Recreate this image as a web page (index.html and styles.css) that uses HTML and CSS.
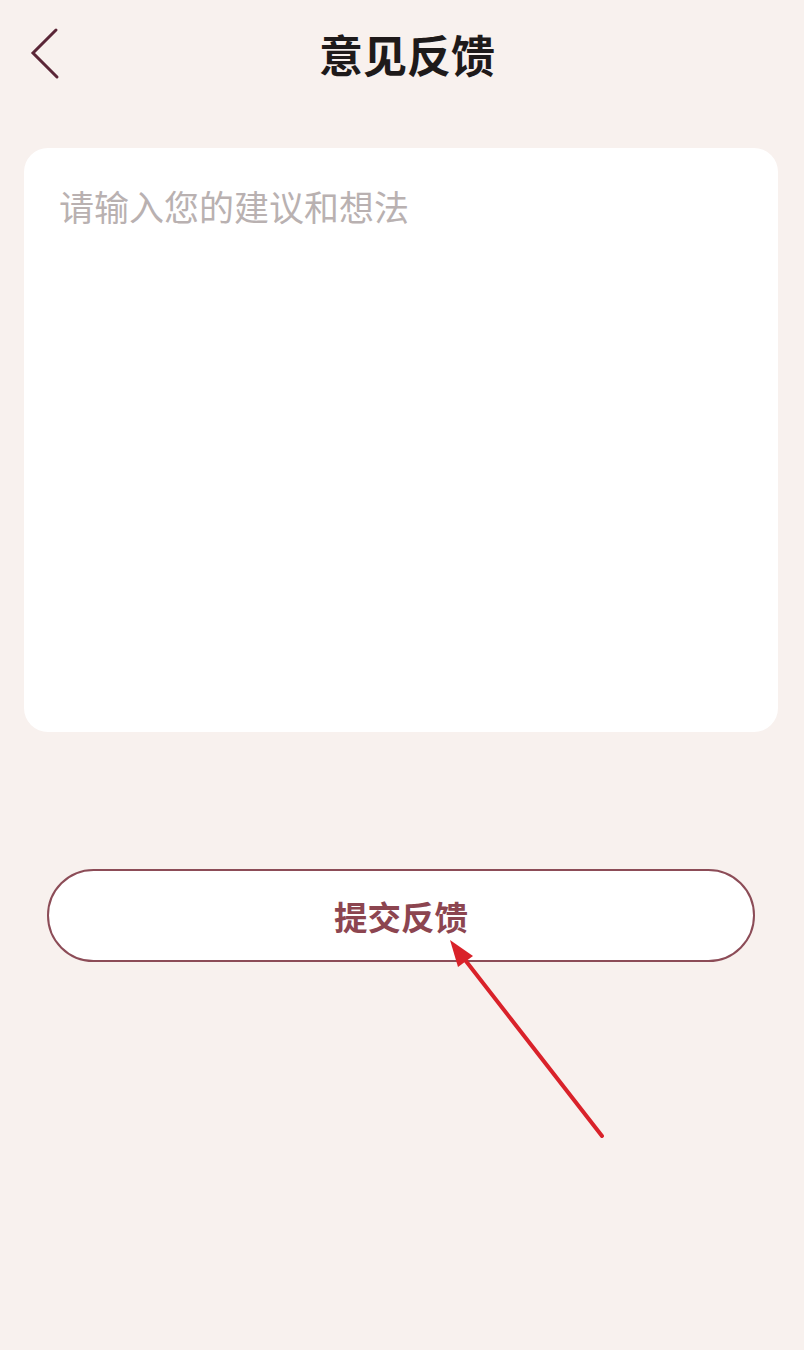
FILE: index.html
```html
<!DOCTYPE html>
<html lang="zh">
<head>
<meta charset="utf-8">
<link rel="stylesheet" href="styles.css">
</head>
<body>
<div class="page">
  <header class="topbar">
    <button class="back" aria-label="返回">
      <svg width="40" height="56" viewBox="0 0 40 56"><path d="M34 4 L11 27 L35 51" fill="none" stroke="#5b2637" stroke-width="3" stroke-linecap="round" stroke-linejoin="miter"/></svg>
    </button>
    <h1 class="title">意见反馈</h1>
  </header>
  <div class="card">
    <div class="placeholder">请输入您的建议和想法</div>
  </div>
  <div class="btn-wrap">
    <button class="submit">提交反馈</button>
  </div>
  <svg class="arrow" width="804" height="1350" viewBox="0 0 804 1350">
    <line x1="602" y1="1136" x2="462" y2="956" stroke="#d9222a" stroke-width="4" stroke-linecap="round"/>
    <polygon points="450,940 473,956 458,967" fill="#d9222a"/>
  </svg>
</div>
</body>
</html>
```
FILE: styles.css
```css
html, body { margin: 0; padding: 0; }
body {
  background: #f8f1ee;
  font-family: "Noto Sans CJK SC", "Noto Sans", sans-serif;
  width: 804px;
  height: 1350px;
  overflow: hidden;
}
.page { position: relative; width: 804px; height: 1350px; }
.topbar {
  position: relative;
  height: 110px;
  display: flex;
  align-items: center;
  justify-content: center;
}
.back {
  position: absolute;
  left: 22px;
  top: 26px;
  border: 0;
  background: none;
  padding: 0;
  width: 40px;
  height: 56px;
}
.back svg { display: block; }
.title {
  margin: 0;
  font-size: 44px;
  font-weight: 700;
  color: #1e1a1a;
  line-height: 1;
  position: relative;
  top: -1px;
  left: 5px;
}
.card {
  margin: 38px 26px 0 24px;
  height: 584px;
  background: #ffffff;
  border-radius: 24px;
  box-sizing: border-box;
  padding: 38px 34px 38px 35px;
}
.placeholder {
  font-size: 35px;
  line-height: 40px;
  color: #b9b1b1;
}
.btn-wrap {
  margin: 137px 49px 0 47px;
}
.submit {
  width: 100%;
  height: 93px;
  box-sizing: border-box;
  border: 2px solid #8c4c57;
  border-radius: 47px;
  background: #ffffff;
  color: #8c4550;
  font-family: "Noto Sans CJK SC", "Noto Sans", sans-serif;
  font-size: 33.5px;
  font-weight: 700;
  padding: 0;
}
.arrow {
  position: absolute;
  left: 0;
  top: 0;
  pointer-events: none;
}
```
